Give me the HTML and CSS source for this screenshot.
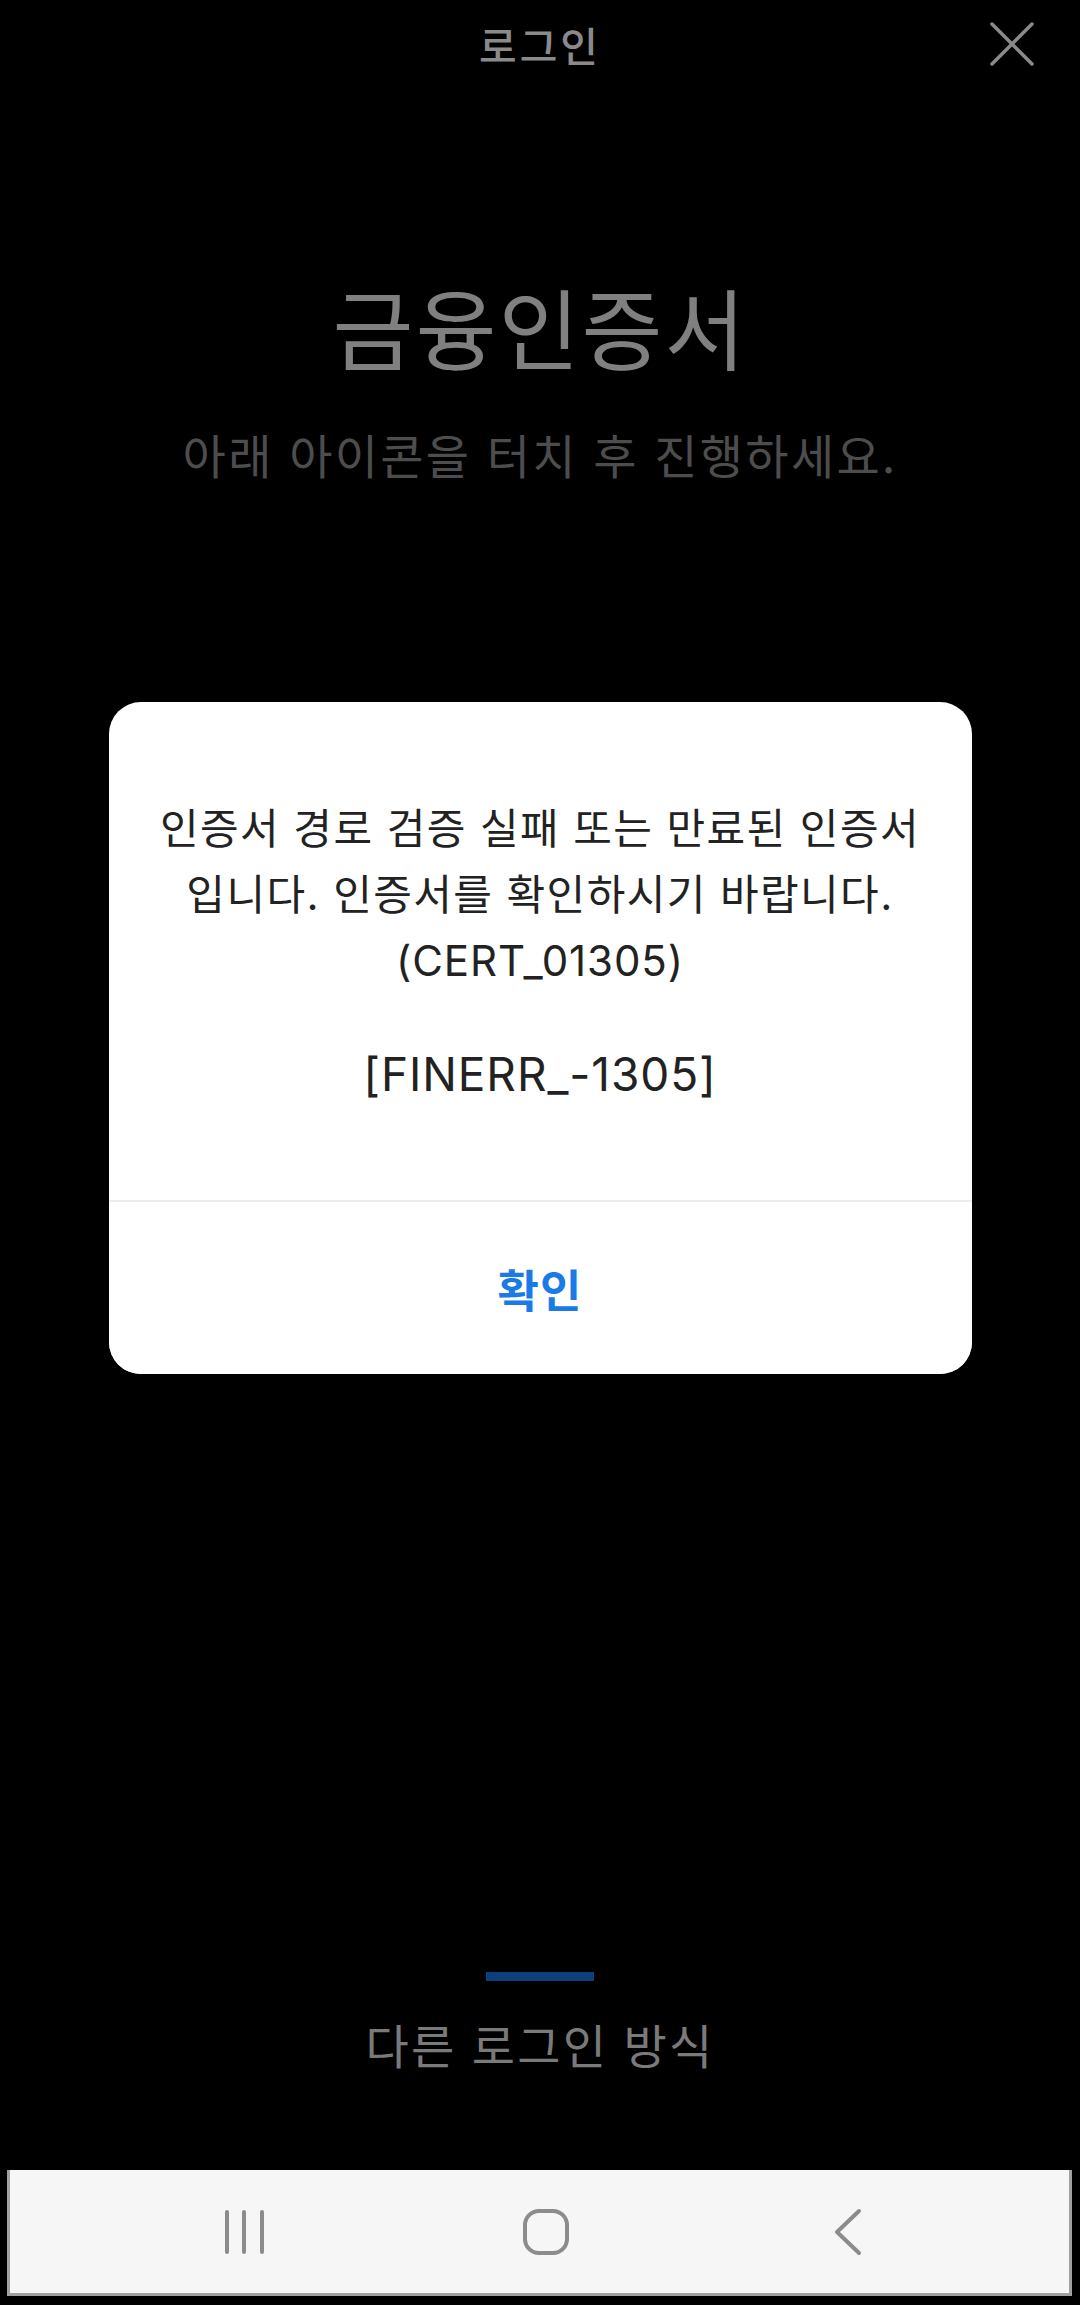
FILE: index.html
```html
<!DOCTYPE html>
<html lang="ko">
<head>
    <meta charset="UTF-8">
    <meta name="viewport" content="width=device-width, initial-scale=1.0">
    <title>로그인</title>
    <link rel="stylesheet" href="styles.css">
</head>
<body>

<div class="page">
    <header class="topbar">
        <span></span>
        <h1 class="topbar-title">로그인</h1>
        <button class="close-btn" aria-label="닫기">
            <svg width="46" height="46" viewBox="0 0 46 46">
                <line x1="3" y1="3" x2="43" y2="43" />
                <line x1="43" y1="3" x2="3" y2="43" />
            </svg>
        </button>
    </header>

    <section class="hero">
        <h2 class="hero-title">금융인증서</h2>
        <p class="hero-sub">아래 아이콘을 터치 후 진행하세요.</p>
    </section>

    <!-- Error dialog -->
    <div class="dialog">
        <div class="dialog-body">
            <p class="msg"><span class="ko">인증서 경로 검증 실패 또는 만료된 인증서<br>입니다. 인증서를 확인하시기 바랍니다.</span><br>(CERT_01305)</p>
            <p class="code">[FINERR_-1305]</p>
        </div>
        <button class="dialog-btn">확인</button>
    </div>

    <footer class="bottom">
        <div class="bar"></div>
        <p class="other-login">다른 로그인 방식</p>

        <nav class="navbar">
            <span class="nav-slot">
                <svg width="44" height="46" viewBox="0 0 44 46">
                    <line x1="5" y1="3" x2="5" y2="43" />
                    <line x1="22" y1="3" x2="22" y2="43" />
                    <line x1="40" y1="3" x2="40" y2="43" />
                </svg>
            </span>
            <span class="nav-slot">
                <svg width="48" height="48" viewBox="0 0 48 48">
                    <rect x="3" y="3" width="42" height="42" rx="14" />
                </svg>
            </span>
            <span class="nav-slot">
                <svg width="30" height="48" viewBox="0 0 30 48">
                    <polyline points="26,3 4,24 26,45" />
                </svg>
            </span>
        </nav>
    </footer>
</div>

</body>
</html>
```

FILE: styles.css
```css
body {
    margin: 0;
    padding: 0;
    background: #000;
    font-family: Inter, "Noto Sans CJK KR", sans-serif;
}

.page {
    display: flex;
    flex-direction: column;
    min-height: 100vh;
}

/* Top bar */
.topbar {
    display: grid;
    grid-template-columns: 1fr auto 1fr;
    align-items: center;
    height: 88px;
}

.topbar-title {
    margin: 0;
    font-family: "Noto Sans CJK KR", sans-serif;
    font-size: 41px;
    font-weight: 500;
    line-height: 88px;
    letter-spacing: 3px;
    color: #8a8a8a;
}

.close-btn {
    justify-self: end;
    margin-right: 45px;
    padding: 0;
    border: none;
    background: none;
    display: flex;
}

.close-btn line {
    stroke: #8a8a8a;
    stroke-width: 3.5;
    stroke-linecap: round;
}

/* Hero */
.hero {
    text-align: center;
    font-family: "Noto Sans CJK KR", sans-serif;
}

.hero-title {
    margin: 187px 0 0;
    font-size: 88px;
    font-weight: 400;
    line-height: 100px;
    letter-spacing: 2px;
    color: #808080;
}

.hero-sub {
    margin: 49px 0 0;
    font-size: 47px;
    line-height: 60px;
    letter-spacing: 2.3px;
    color: #4d4d4d;
}

/* Dialog */
.dialog {
    width: 863px;
    margin: 218px auto 0;
    background: #fff;
    border-radius: 32px;
    overflow: hidden;
}

.dialog-body {
    padding: 94px 10px 93px;
    text-align: center;
    color: #222;
}

.msg {
    margin: 0;
    font-size: 42px;
    line-height: 66px;
    letter-spacing: 0.9px;
}

.msg .ko {
    letter-spacing: 1.4px;
}

.code {
    margin: 47px 0 0;
    font-size: 46px;
    line-height: 66px;
    letter-spacing: 0.9px;
}

.dialog-btn {
    display: flex;
    align-items: center;
    justify-content: center;
    width: 100%;
    height: 174px;
    padding: 0;
    border: none;
    border-top: 2px solid #ededed;
    background: #fff;
    font-family: "Noto Sans CJK KR", sans-serif;
    font-size: 45px;
    font-weight: 700;
    letter-spacing: 1px;
    color: #1a7ae6;
}

/* Bottom */
.bottom {
    margin-top: auto;
    display: flex;
    flex-direction: column;
    align-items: center;
}

.bar {
    width: 108px;
    height: 9px;
    background: #0d3f7d;
}

.other-login {
    margin: 33px 0 0;
    font-family: "Noto Sans CJK KR", sans-serif;
    font-size: 47px;
    line-height: 60px;
    letter-spacing: 2.2px;
    color: #7a7a7a;
}

.navbar {
    align-self: stretch;
    display: flex;
    align-items: center;
    gap: 202px;
    height: 123px;
    margin: 96px 8px 9px 7px;
    padding-left: 184px;
    background: #f6f6f6;
    border: 3px solid #a0a0a0;
    border-top: none;
}

.nav-slot {
    width: 100px;
    display: flex;
    justify-content: center;
}

.nav-slot line,
.nav-slot rect,
.nav-slot polyline {
    fill: none;
    stroke: #8c8c8c;
    stroke-width: 4;
    stroke-linecap: round;
    stroke-linejoin: round;
}
```
